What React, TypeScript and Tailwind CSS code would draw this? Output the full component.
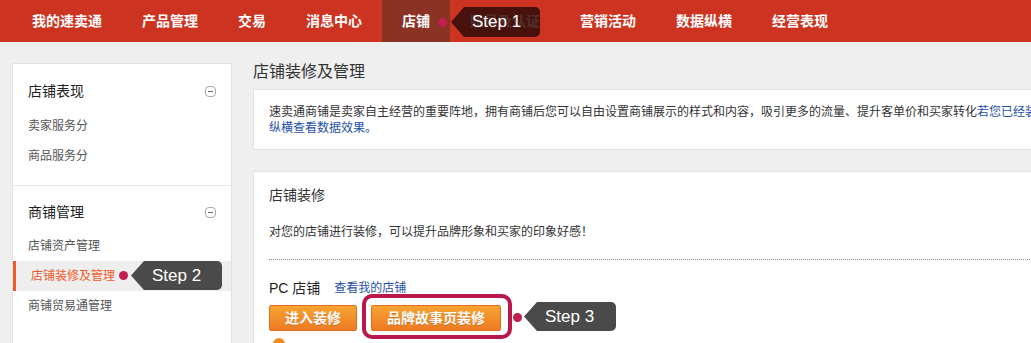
import React from "react";

const font = { fontFamily: '"Liberation Sans", "Noto Sans CJK SC", sans-serif' };

function Tip({ label, className }: { label: string; className: string }) {
  return (
    <div
      className={
        "absolute flex items-center pl-[21px] text-[17px] text-white rounded-r-[5px] [clip-path:polygon(13px_0,100%_0,100%_100%,13px_100%,0_50%)] " +
        className
      }
    >
      {label}
    </div>
  );
}

function Dot({ className }: { className: string }) {
  return <div className={"absolute w-[9px] h-[9px] rounded-full bg-[#c21f4e] " + className} />;
}

function Minus() {
  return (
    <div className="w-[11px] h-[11px] rounded-[4px] border border-[#a8a8a8] flex items-center justify-center">
      <div className="w-[5px] h-[1px] bg-[#666]" />
    </div>
  );
}

export default function App() {
  const navItems = ["我的速卖通", "产品管理", "交易", "消息中心", "店铺", "账号及认证", "营销活动", "数据纵横", "经营表现"];
  return (
    <div className="w-[1031px] h-[343px] overflow-hidden bg-[#efefef] relative" style={font}>
      {/* Top nav */}
      <div className="relative h-[42px] bg-[#cc3421] flex pl-[12px]">
        {navItems.map((n) => (
          <div
            key={n}
            className={
              "h-full flex items-center px-5 text-[14px] font-bold text-white " +
              (n === "店铺" ? "bg-[#8a3325]" : "")
            }
          >
            {n}
          </div>
        ))}
        <Dot className="left-[438px] top-[18px]" />
        <Tip label="Step 1" className="left-[451px] top-[7px] w-[89px] h-[30px] bg-[#300c08]/85" />
      </div>

      <div className="flex pl-[12px] gap-[21px]">
        {/* Sidebar */}
        <div className="mt-[21px] w-[220px] flex-none bg-white border border-[#e2e2e2]">
          <div className="pt-[17px] pb-[14px] border-b border-[#e8e8e8]">
            <div className="h-[20px] flex items-center justify-between pl-[15px] pr-[15px]">
              <span className="text-[14px] text-[#222]">店铺表现</span>
              <Minus />
            </div>
            <div className="mt-[10px]">
              <div className="h-[30px] flex items-center pl-[15px] text-[12px] text-[#555]">卖家服务分</div>
              <div className="h-[30px] flex items-center pl-[15px] text-[12px] text-[#555]">商品服务分</div>
            </div>
          </div>
          <div className="pt-[16px] pb-[14px]">
            <div className="h-[20px] flex items-center justify-between pl-[15px] pr-[15px]">
              <span className="text-[14px] text-[#222]">商铺管理</span>
              <Minus />
            </div>
            <div className="mt-[9px]">
              <div className="h-[30px] flex items-center pl-[15px] text-[12px] text-[#555]">店铺资产管理</div>
              <div className="relative h-[30px] flex items-center pl-[18px] text-[12px] text-[#f05a28] bg-[#eeeeee]">
                <div className="absolute left-0 top-0 bottom-0 w-[3px] bg-[#f05a28]" />
                店铺装修及管理
                <Dot className="left-[106px] top-[10px]" />
                <Tip label="Step 2" className="left-[118px] top-0 w-[91px] h-[29px] bg-[#4a4a4a]" />
              </div>
              <div className="h-[30px] flex items-center pl-[15px] text-[12px] text-[#555]">商铺贸易通管理</div>
            </div>
          </div>
        </div>

        {/* Main */}
        <div className="flex-none w-[940px]">
          <div className="mt-[19px] h-[22px] flex items-center text-[16px] text-[#333]">店铺装修及管理</div>
          <div className="mt-[6px] bg-white border border-[#e2e2e2] pl-[15px] pt-[14px] pb-[13px]">
            <p className="whitespace-nowrap text-[12px] leading-[16px] text-[#333]">
              速卖通商铺是卖家自主经营的重要阵地，拥有商铺后您可以自由设置商铺展示的样式和内容，吸引更多的流量、提升客单价和买家转化
              <span className="text-[#1e50a8]">若您已经装修了店铺，可以到数据</span>
              <br />
              <span className="text-[#1e50a8]">纵横查看数据效果。</span>
            </p>
          </div>

          <div className="mt-[21px] bg-white border border-[#e2e2e2] pl-[15px] pt-[13px] h-[200px]">
            <div className="h-[20px] flex items-center text-[14px] text-[#333]">店铺装修</div>
            <div className="mt-[18px] h-[18px] flex items-center text-[12px] text-[#333]">
              对您的店铺进行装修，可以提升品牌形象和买家的印象好感！
            </div>
            <div className="mt-[18px] border-t border-dotted border-[#8a8a8a]" />
            <div className="mt-[17px] h-[22px] flex items-center">
              <span className="text-[14px] text-[#222]">PC 店铺</span>
              <span className="ml-[14px] text-[12px] text-[#1e50a8]">查看我的店铺</span>
            </div>
            <div className="mt-[6px] flex gap-[14px]">
              <button className="h-[26px] w-[88px] rounded-[2px] border border-[#de6f1c] bg-gradient-to-b from-[#f7a432] to-[#ee7a22] text-white text-[14px] font-bold [text-shadow:0_1px_0_rgba(160,70,0,0.4)]">
                进入装修
              </button>
              <div className="relative">
                <button className="h-[26px] w-[130px] rounded-[2px] border border-[#de6f1c] bg-gradient-to-b from-[#f7a432] to-[#ee7a22] text-white text-[14px] font-bold [text-shadow:0_1px_0_rgba(160,70,0,0.4)]">
                  品牌故事页装修
                </button>
                <div className="absolute -left-[9px] -right-[11px] -top-[11px] -bottom-[8px] border-4 border-[#b8184b] rounded-[10px]" />
                <Dot className="left-[142px] top-[8px]" />
                <Tip label="Step 3" className="left-[153px] -top-[3px] w-[92px] h-[29px] bg-[#4a4a4a]" />
              </div>
            </div>
            <div className="mt-[7px] flex items-start gap-[10px] pl-[4px]">
              <div className="w-[12px] h-[12px] rounded-full bg-[#f28c1e]" />
              <span className="mt-[3px] text-[12px] text-[#888]">
                如您有多个品牌店铺，可以在品牌故事页装修中为每个品牌分别设置品牌故事页面，展示给浏览该品牌商品的买家。
              </span>
            </div>
          </div>
        </div>
      </div>
    </div>
  );
}
